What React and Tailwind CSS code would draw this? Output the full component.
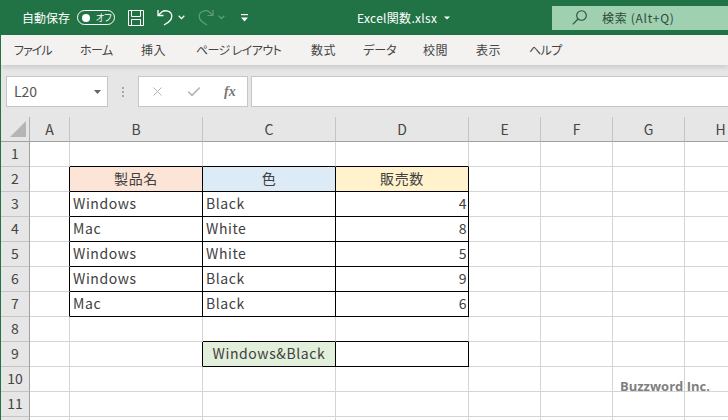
import React from "react";
import { X, Check } from "lucide-react";

const tabs = [
  { t: "ファイル", c: "w-[66px] tracking-[-1px]" },
  { t: "ホーム", c: "w-[61px] tracking-[-0.6px]" },
  { t: "挿入", c: "w-[55px] tracking-[0.5px]" },
  { t: "ページ レイアウト", c: "w-[115px] tracking-[-0.6px]" },
  { t: "数式", c: "w-[52px] tracking-[0.5px]" },
  { t: "データ", c: "w-[60px]" },
  { t: "校閲", c: "w-[53px] tracking-[0.5px]" },
  { t: "表示", c: "w-[53px] tracking-[0.5px]" },
  { t: "ヘルプ", c: "w-[50px] tracking-[-0.6px]" },
];
const cols = ["A", "B", "C", "D", "E", "F", "G", "H"];
const rows = [
  { n: 1 },
  { n: 2, b: { t: "製品名", bg: "bg-[#fce4d6]", center: true }, c: { t: "色", bg: "bg-[#ddebf7]", center: true }, d: { t: "販売数", bg: "bg-[#fff2cc]", center: true } },
  { n: 3, b: { t: "Windows" }, c: { t: "Black" }, d: { t: "4", right: true } },
  { n: 4, b: { t: "Mac" }, c: { t: "White" }, d: { t: "8", right: true } },
  { n: 5, b: { t: "Windows" }, c: { t: "White" }, d: { t: "5", right: true } },
  { n: 6, b: { t: "Windows" }, c: { t: "Black" }, d: { t: "9", right: true } },
  { n: 7, b: { t: "Mac" }, c: { t: "Black" }, d: { t: "6", right: true } },
  { n: 8 },
  { n: 9, c: { t: "Windows&Black", bg: "bg-[#e2efda]", center: true }, d: { t: "" } },
  { n: 10 },
  { n: 11 },
  { n: 12, hideNumber: true },
];

function inTable(r, ci) {
  return r >= 2 && r <= 7 && ci >= 1 && ci <= 3;
}
function inBox(r, ci) {
  return r === 9 && (ci === 2 || ci === 3);
}
function isBlack(r, ci) {
  return inTable(r, ci) || inBox(r, ci);
}

function Cell({ r, ci, data }) {
  const rightBlack = isBlack(r, ci) || isBlack(r, ci + 1);
  const bottomBlack = isBlack(r, ci) || isBlack(r + 1, ci);
  const align = data?.center ? "justify-center" : data?.right ? "justify-end pr-[1px]" : "justify-start pl-[3px]";
  return (
    <div
      className={`flex items-center border-r border-b pb-[2px] text-[14px] tracking-[0.6px] text-[#404040] ${rightBlack ? "border-r-black" : "border-r-[#d4d4d4]"} ${bottomBlack ? "border-b-black" : "border-b-[#d4d4d4]"} ${align} ${data?.bg || "bg-white"}`}
    >
      {data?.t}
    </div>
  );
}

function Sheet() {
  return (
    <div className="grid grid-cols-[29px_40px_133px_133px_133px_72px_72px_72px_72px] grid-rows-[25px_repeat(12,25px)]">
      <div className="relative border-r border-b border-r-[#b0b0b0] border-b-[#a0a0a0] bg-[#e6e6e6]">
        <svg className="absolute left-[9px] top-[4px]" width="17" height="17" viewBox="0 0 17 17">
          <polygon points="16,0 16,16 0,16" fill="#b5b5b5" />
        </svg>
      </div>
      {cols.map((c) => (
        <div key={c} className="flex items-center justify-center border-r border-b border-r-[#c4c4c4] border-b-[#a0a0a0] bg-[#e6e6e6] text-[14px] text-[#444]">
          {c}
        </div>
      ))}
      {rows.map((row) => (
        <React.Fragment key={row.n}>
          <div className="flex items-center justify-center border-r border-b border-r-[#a0a0a0] border-b-[#c4c4c4] bg-[#e6e6e6] pb-[2px] text-[14px] text-[#444]">
            {row.hideNumber ? "" : row.n}
          </div>
          <Cell r={row.n} ci={0} />
          <Cell r={row.n} ci={1} data={row.b} />
          <Cell r={row.n} ci={2} data={row.c} />
          <Cell r={row.n} ci={3} data={row.d} />
          <Cell r={row.n} ci={4} />
          <Cell r={row.n} ci={5} />
          <Cell r={row.n} ci={6} />
          <Cell r={row.n} ci={7} />
        </React.Fragment>
      ))}
    </div>
  );
}

function Chevron({ color = "#fff" }) {
  return (
    <svg width="7" height="5" viewBox="0 0 7 5" fill="none" stroke={color} strokeWidth="1.3">
      <path d="M0.7 0.8 L3.5 3.6 L6.3 0.8" />
    </svg>
  );
}

function TitleBar() {
  return (
    <div className="flex h-[35px] shrink-0 items-center bg-[#217346] pl-[21px] text-white">
      <span className="w-[48px] text-[12px]">自動保存</span>
      <div className="ml-[7px] flex h-[15px] w-[38px] shrink-0 items-center rounded-full border border-white pl-[4px]">
        <span className="h-[8px] w-[8px] shrink-0 rounded-full bg-white" />
        <span className="ml-[6px] text-[9px] leading-none [font-feature-settings:'palt']">オフ</span>
      </div>
      <svg className="ml-[13px]" width="16" height="16" viewBox="0 0 16 16" fill="none" stroke="#fff" strokeWidth="1">
        <path d="M0.5 0.5 H15.5 V15.5 H0.5 Z" />
        <path d="M3.5 0.5 V6.5 H12.5 V0.5" />
        <path d="M3.5 15.5 V9.5 H12.5 V15.5" />
      </svg>
      <svg className="ml-[13px]" width="16" height="17" viewBox="0 0 16 17" fill="none" stroke="#fff" strokeWidth="1.3">
        <path d="M1 1 V6.5 H6.5" />
        <path d="M1.3 6.3 L5 2.8 C8 0.6 14.5 2 14.8 7 C15 11.5 11 14 7 16" />
      </svg>
      <span className="ml-[5px]"><Chevron /></span>
      <svg className="ml-[13px]" width="16" height="17" viewBox="0 0 16 17" fill="none" stroke="#5f9e7c" strokeWidth="1.2">
        <path d="M15 1 V6.5 H9.5" />
        <path d="M14.7 6.3 L11 2.8 C8 0.6 1.5 2 1.2 7 C1 11.5 5 14 9 16" />
      </svg>
      <span className="ml-[4px]"><Chevron color="#5f9e7c" /></span>
      <svg className="ml-[16px]" width="7" height="8" viewBox="0 0 7 8" fill="#fff">
        <rect x="0" y="0" width="7" height="1.2" />
        <polygon points="0,3.5 7,3.5 3.5,7.5" />
      </svg>
      <span className="ml-[109px] w-[81px] shrink-0 text-[12px] tracking-[0.3px] whitespace-nowrap">Excel関数.xlsx</span>
      <svg className="ml-[6px]" width="6" height="4" viewBox="0 0 6 4" fill="#fff">
        <polygon points="0,0.5 6,0.5 3,3.5" />
      </svg>
      <div className="ml-[102px] flex h-[24px] flex-1 items-center bg-[#9fd0b0] pl-[20px] text-[#2d4a3a]">
        <svg width="15" height="15" viewBox="0 0 15 15" fill="none" stroke="#2d4a3a" strokeWidth="1.1">
          <circle cx="9.5" cy="5.5" r="4.8" />
          <path d="M6 9 L0.8 14.3" />
        </svg>
        <span className="ml-[15px] text-[12px] tracking-[0.7px] whitespace-nowrap">検索 (Alt+Q)</span>
      </div>
    </div>
  );
}

function Tabs() {
  return (
    <div className="z-10 flex h-[30px] shrink-0 items-center bg-[#f3f2f1] pl-[13px] text-[12px] text-[#444] shadow-[0_2px_5px_rgba(0,0,0,0.13)] [font-feature-settings:'palt']">
      {tabs.map((x) => (
        <span key={x.t} className={`shrink-0 whitespace-nowrap ${x.c}`}>{x.t}</span>
      ))}
    </div>
  );
}

function FormulaBar() {
  return (
    <div className="flex h-[52px] shrink-0 items-start bg-[#e6e6e6] pt-[11px] pl-[5px]">
      <div className="flex h-[31px] w-[102px] items-center justify-between border border-[#c6c6c6] bg-white pr-[6px] pl-[7px] text-[14px] text-[#555]">
        <span>L20</span>
        <svg width="7" height="4" viewBox="0 0 7 4" fill="#666"><polygon points="0,0 7,0 3.5,4" /></svg>
      </div>
      <div className="flex h-[31px] w-[30px] flex-col items-center justify-center gap-[2px]">
        <span className="h-[2px] w-[2px] bg-[#a8a8a8]" />
        <span className="h-[2px] w-[2px] bg-[#a8a8a8]" />
        <span className="h-[2px] w-[2px] bg-[#a8a8a8]" />
      </div>
      <div className="flex h-[31px] w-[110px] items-center border border-[#c6c6c6] bg-white pl-[11px]">
        <X size={15} strokeWidth={1.6} className="text-[#b4b4b4]" />
        <Check size={16} strokeWidth={2.4} className="ml-[21px] text-[#b4b4b4]" />
        <span className="ml-[22px] font-['Liberation_Serif',serif] text-[14px] font-bold text-[#777] italic">fx</span>
      </div>
      <div className="ml-[3px] h-[31px] flex-1 border border-r-0 border-[#c6c6c6] bg-white" />
    </div>
  );
}

export default function App() {
  return (
    <div className="relative flex h-[420px] w-[728px] flex-col overflow-hidden border-l border-l-[#217346] bg-white font-['Noto_Sans_CJK_JP','Noto_Sans',sans-serif]">
      <TitleBar />
      <Tabs />
      <FormulaBar />
      <Sheet />
      <span className="absolute top-[377px] left-[619px] font-['Open_Sans',sans-serif] text-[13px] font-bold text-[#7f7f7f]">Buzzword Inc.</span>
    </div>
  );
}
